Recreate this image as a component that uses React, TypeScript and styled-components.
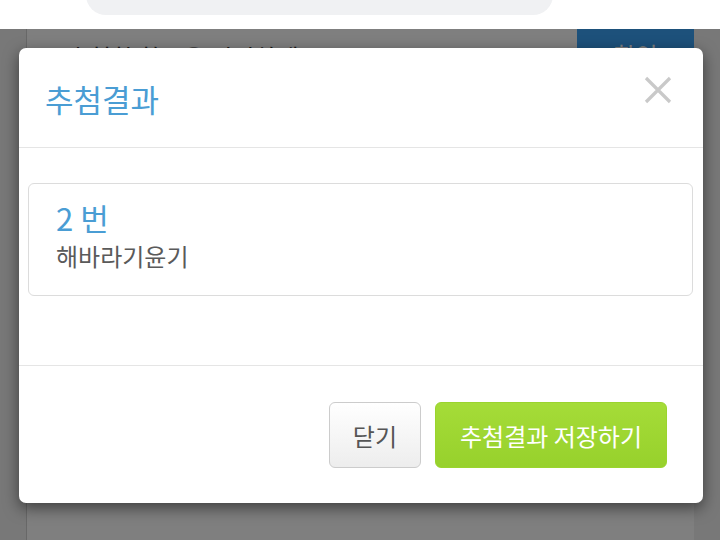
import { FC } from "react";
import { styled, createGlobalStyle } from "styled-components";

const GlobalStyle = createGlobalStyle`
  html, body {
    margin: 0;
    padding: 0;
    height: 540px;
    overflow: hidden;
    background: #f0f0f0;
    font-family: "Noto Sans CJK KR", "Noto Sans", sans-serif;
  }
`;

const App: FC = () => {
  return (
    <Screen>
      <GlobalStyle />
      <TopBar>
        <SearchPill />
      </TopBar>
      <Page>
        <SideStrip />
        <Content>
          <ContentRow>
            <RowText>추첨할 항목을 입력하세요</RowText>
            <BlueButton>확인</BlueButton>
          </ContentRow>
        </Content>
        <SideStrip />
      </Page>

      <Overlay />

      <Modal>
        <ModalHeader>
          <Title>추첨결과</Title>
          <CloseButton aria-label="close">
            <svg width="28" height="28" viewBox="0 0 28 28">
              <path
                d="M2 2 L26 26 M26 2 L2 26"
                stroke="#c9c9c9"
                strokeWidth="3.2"
                fill="none"
              />
            </svg>
          </CloseButton>
        </ModalHeader>

        <ModalBody>
          <ResultCard>
            <ResultNumber>2 번</ResultNumber>
            <ResultName>해바라기윤기</ResultName>
          </ResultCard>
        </ModalBody>

        <ModalFooter>
          <Button>닫기</Button>
          <Button $primary>추첨결과 저장하기</Button>
        </ModalFooter>
      </Modal>
    </Screen>
  );
};

const Screen = styled.div`
  position: relative;
  width: 720px;
  height: 540px;
  display: flex;
  flex-direction: column;
  overflow: hidden;
`;

const TopBar = styled.div`
  height: 29px;
  background: #ffffff;
  padding-left: 86px;
  position: relative;
  z-index: 3;
  overflow: hidden;
`;

const SearchPill = styled.div`
  width: 467px;
  height: 44px;
  margin-top: -29px;
  border-radius: 20px;
  background: #f0f1f3;
`;

const Page = styled.div`
  flex: 1;
  display: flex;
`;

const SideStrip = styled.div`
  width: 26px;
  flex-shrink: 0;
  background: #f0f0f0;
`;

const Content = styled.div`
  flex: 1;
  background: #ffffff;
  border-left: 1px solid #d0d0d0;
`;

const ContentRow = styled.div`
  display: flex;
  justify-content: space-between;
  align-items: flex-start;
  padding-left: 40px;
`;

const RowText = styled.div`
  font-size: 24px;
  color: #333;
  padding-top: 10px;
`;

const BlueButton = styled.div`
  width: 117px;
  height: 60px;
  flex-shrink: 0;
  background: #3aa2f6;
  color: #fff;
  font-size: 24px;
  text-align: center;
  line-height: 52px;
`;

const Overlay = styled.div`
  position: absolute;
  left: 0;
  right: 0;
  top: 29px;
  bottom: 0;
  background: rgba(0, 0, 0, 0.5);
  z-index: 1;
`;

const Modal = styled.div`
  position: absolute;
  left: 19px;
  top: 48px;
  width: 684px;
  height: 455px;
  background: #ffffff;
  border-radius: 7px;
  box-shadow: 0 5px 15px rgba(0, 0, 0, 0.5);
  z-index: 2;
  display: flex;
  flex-direction: column;
`;

const ModalHeader = styled.div`
  height: 99px;
  border-bottom: 1px solid #e5e5e5;
  display: flex;
  justify-content: space-between;
  align-items: center;
  padding: 0 31px 0 26px;
`;

const Title = styled.h4`
  margin: 0;
  padding-top: 1px;
  font-size: 31px;
  font-weight: 400;
  color: #4a9dd4;
`;

const CloseButton = styled.button`
  border: 0;
  background: none;
  padding: 0;
  margin-top: -15px;
  display: flex;
  cursor: pointer;
`;

const ModalBody = styled.div`
  height: 182px;
  padding: 35px 10px 0 9px;
  border-bottom: 1px solid #e5e5e5;
`;

const ResultCard = styled.div`
  border: 1px solid #dcdcdc;
  border-radius: 6px;
  padding: 13px 27px 0;
  height: 98px;
`;

const ResultNumber = styled.div`
  font-size: 31px;
  line-height: 42px;
  color: #4a9dd4;
`;

const ResultName = styled.div`
  font-size: 24px;
  line-height: 34px;
  color: #5a5a5a;
`;

const ModalFooter = styled.div`
  flex: 1;
  display: flex;
  justify-content: flex-end;
  align-items: flex-start;
  gap: 14px;
  padding: 36px 36px 0;
`;

const Button = styled.button<{ $primary?: boolean }>`
  height: 66px;
  padding: 0 ${(p) => (p.$primary ? "24px" : "23px")};
  border-radius: 6px;
  font-family: inherit;
  font-size: 24px;
  cursor: pointer;
  border: 1px solid ${(p) => (p.$primary ? "#9ad42e" : "#cccccc")};
  color: ${(p) => (p.$primary ? "#ffffff" : "#555555")};
  background: ${(p) =>
    p.$primary
      ? "linear-gradient(#a5dc38, #97d12c)"
      : "linear-gradient(#ffffff, #ededed)"};
`;

export default App;
